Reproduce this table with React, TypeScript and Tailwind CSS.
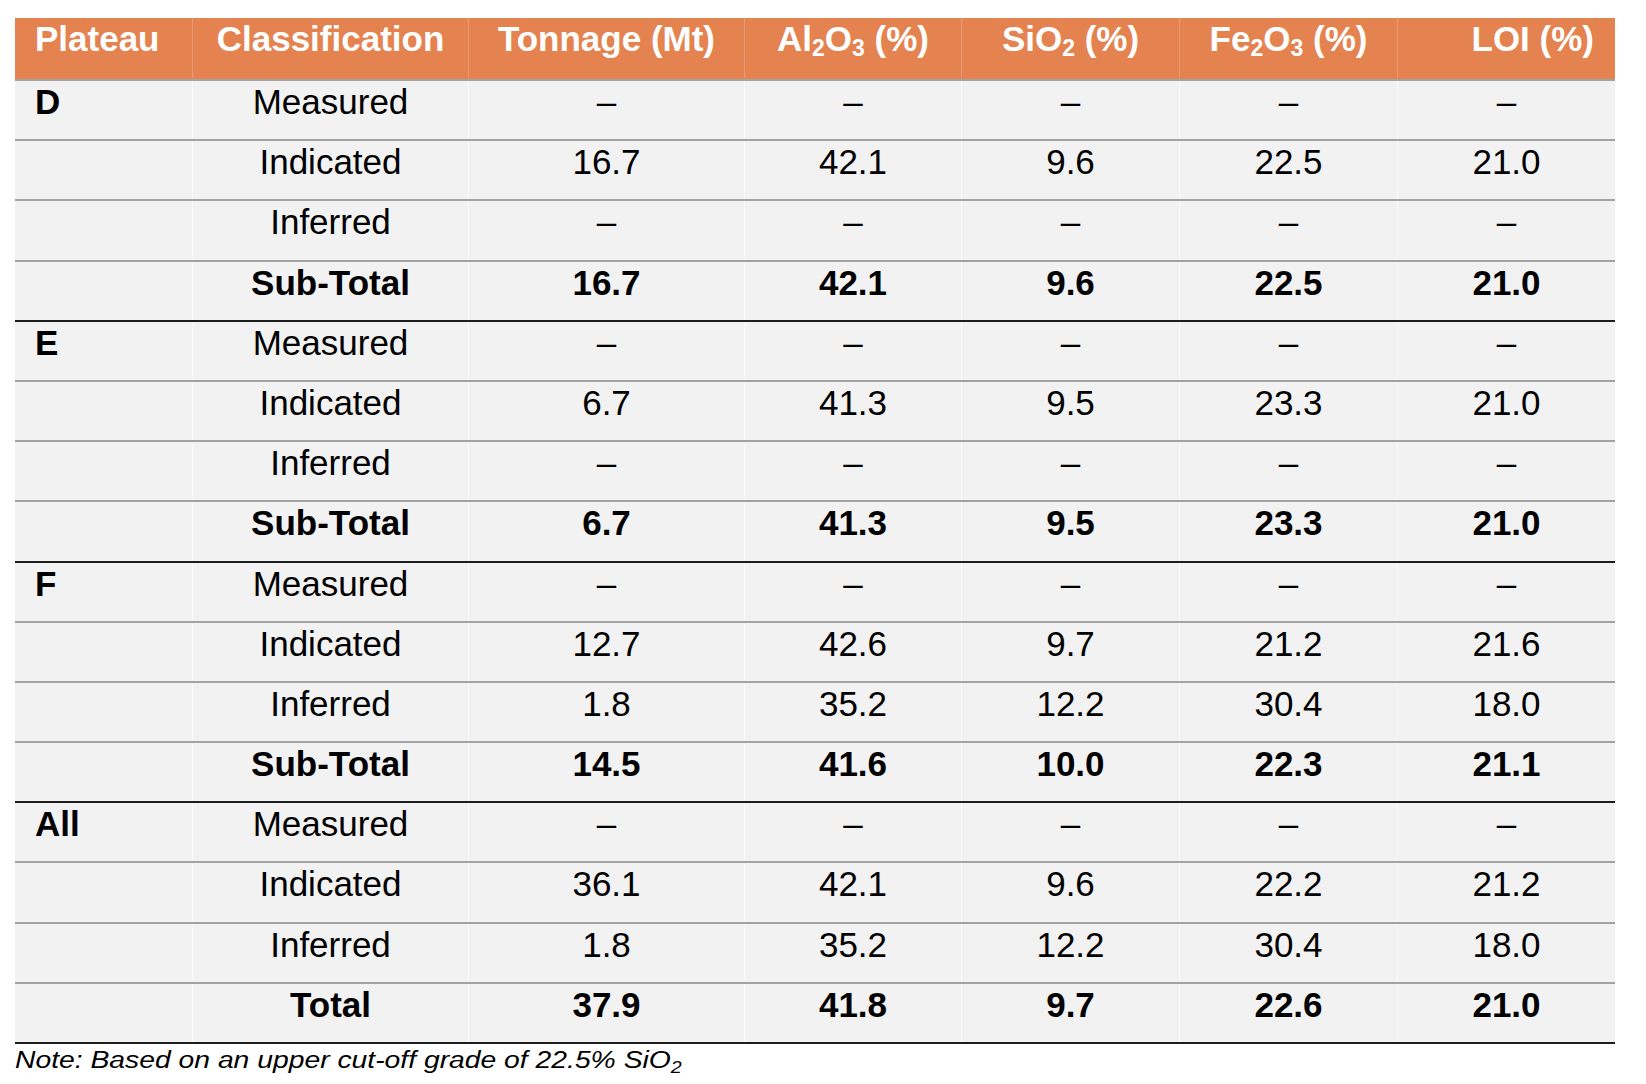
import React from "react";

type Row = { c: string; v: string[]; bold?: boolean };
type Group = { p: string; rows: Row[] };

const D = "–";
const dashes = [D, D, D, D, D];

const groups: Group[] = [
  {
    p: "D",
    rows: [
      { c: "Measured", v: dashes },
      { c: "Indicated", v: ["16.7", "42.1", "9.6", "22.5", "21.0"] },
      { c: "Inferred", v: dashes },
      { c: "Sub-Total", v: ["16.7", "42.1", "9.6", "22.5", "21.0"], bold: true },
    ],
  },
  {
    p: "E",
    rows: [
      { c: "Measured", v: dashes },
      { c: "Indicated", v: ["6.7", "41.3", "9.5", "23.3", "21.0"] },
      { c: "Inferred", v: dashes },
      { c: "Sub-Total", v: ["6.7", "41.3", "9.5", "23.3", "21.0"], bold: true },
    ],
  },
  {
    p: "F",
    rows: [
      { c: "Measured", v: dashes },
      { c: "Indicated", v: ["12.7", "42.6", "9.7", "21.2", "21.6"] },
      { c: "Inferred", v: ["1.8", "35.2", "12.2", "30.4", "18.0"] },
      { c: "Sub-Total", v: ["14.5", "41.6", "10.0", "22.3", "21.1"], bold: true },
    ],
  },
  {
    p: "All",
    rows: [
      { c: "Measured", v: dashes },
      { c: "Indicated", v: ["36.1", "42.1", "9.6", "22.2", "21.2"] },
      { c: "Inferred", v: ["1.8", "35.2", "12.2", "30.4", "18.0"] },
      { c: "Total", v: ["37.9", "41.8", "9.7", "22.6", "21.0"], bold: true },
    ],
  },
];

const GRID = "grid grid-cols-[177px_276px_276px_217px_218px_218px_218px]";

function Sub({ children }: { children: React.ReactNode }) {
  return <sub className="text-[23px] bottom-[-0.2em]">{children}</sub>;
}

export default function App() {
  return (
    <div
      className="min-h-screen bg-white pt-[18px] px-[15px] text-black"
      style={{ fontFamily: '"Liberation Sans", Arial, Helvetica, sans-serif' }}
    >
      <div className="w-[1600px]">
        {/* Header */}
        <div className={`${GRID} h-[61px] bg-[#e4834f] text-white font-bold text-[35px] leading-[40px]`}>
          <div className="pl-[20px] pt-[1px] text-left">Plateau</div>
          <div className="pt-[1px] text-center border-l border-[#e99a70]">Classification</div>
          <div className="pt-[1px] text-center border-l border-[#e99a70]">Tonnage (Mt)</div>
          <div className="pt-[1px] text-center border-l border-[#e99a70]">
            Al<Sub>2</Sub>O<Sub>3</Sub> (%)
          </div>
          <div className="pt-[1px] text-center border-l border-[#e99a70]">
            SiO<Sub>2</Sub> (%)
          </div>
          <div className="pt-[1px] text-center border-l border-[#e99a70]">
            Fe<Sub>2</Sub>O<Sub>3</Sub> (%)
          </div>
          <div className="pt-[1px] pr-[21px] text-right border-l border-[#e99a70]">LOI (%)</div>
        </div>

        {/* Body */}
        {groups.map((g, gi) =>
          g.rows.map((r, ri) => {
            const isLast = gi === groups.length - 1 && ri === g.rows.length - 1;
            const topCls =
              ri === 0 && gi > 0 ? "border-t-2 border-t-[#1e1e1e]" : "border-t-2 border-t-[#a3a3a3]";
            const bottomCls = isLast ? "border-b-2 border-b-[#1e1e1e] h-[62.2px]" : "h-[60.2px]";
            const weight = r.bold ? "font-bold" : "font-normal";
            return (
              <div
                key={`${gi}-${ri}`}
                className={`${GRID} ${topCls} ${bottomCls} bg-[#f2f2f2] text-[35px] leading-[40px]`}
              >
                <div className="pl-[20px] pt-[1px] text-left font-bold">{ri === 0 ? g.p : ""}</div>
                <div className={`pt-[1px] text-center border-l border-l-[#fafafa] ${weight}`}>{r.c}</div>
                {r.v.map((val, vi) => (
                  <div key={vi} className={`pt-[1px] text-center border-l border-l-[#fafafa] ${weight}`}>
                    {val}
                  </div>
                ))}
              </div>
            );
          })
        )}

        {/* Note */}
        <div className="mt-[3px] text-[23px] leading-[26px] italic">
          <span className="inline-block origin-left scale-x-[1.23]">
            Note: Based on an upper cut-off grade of 22.5% SiO<sub className="text-[16px] bottom-[-0.3em]">2</sub>
          </span>
        </div>
      </div>
    </div>
  );
}
